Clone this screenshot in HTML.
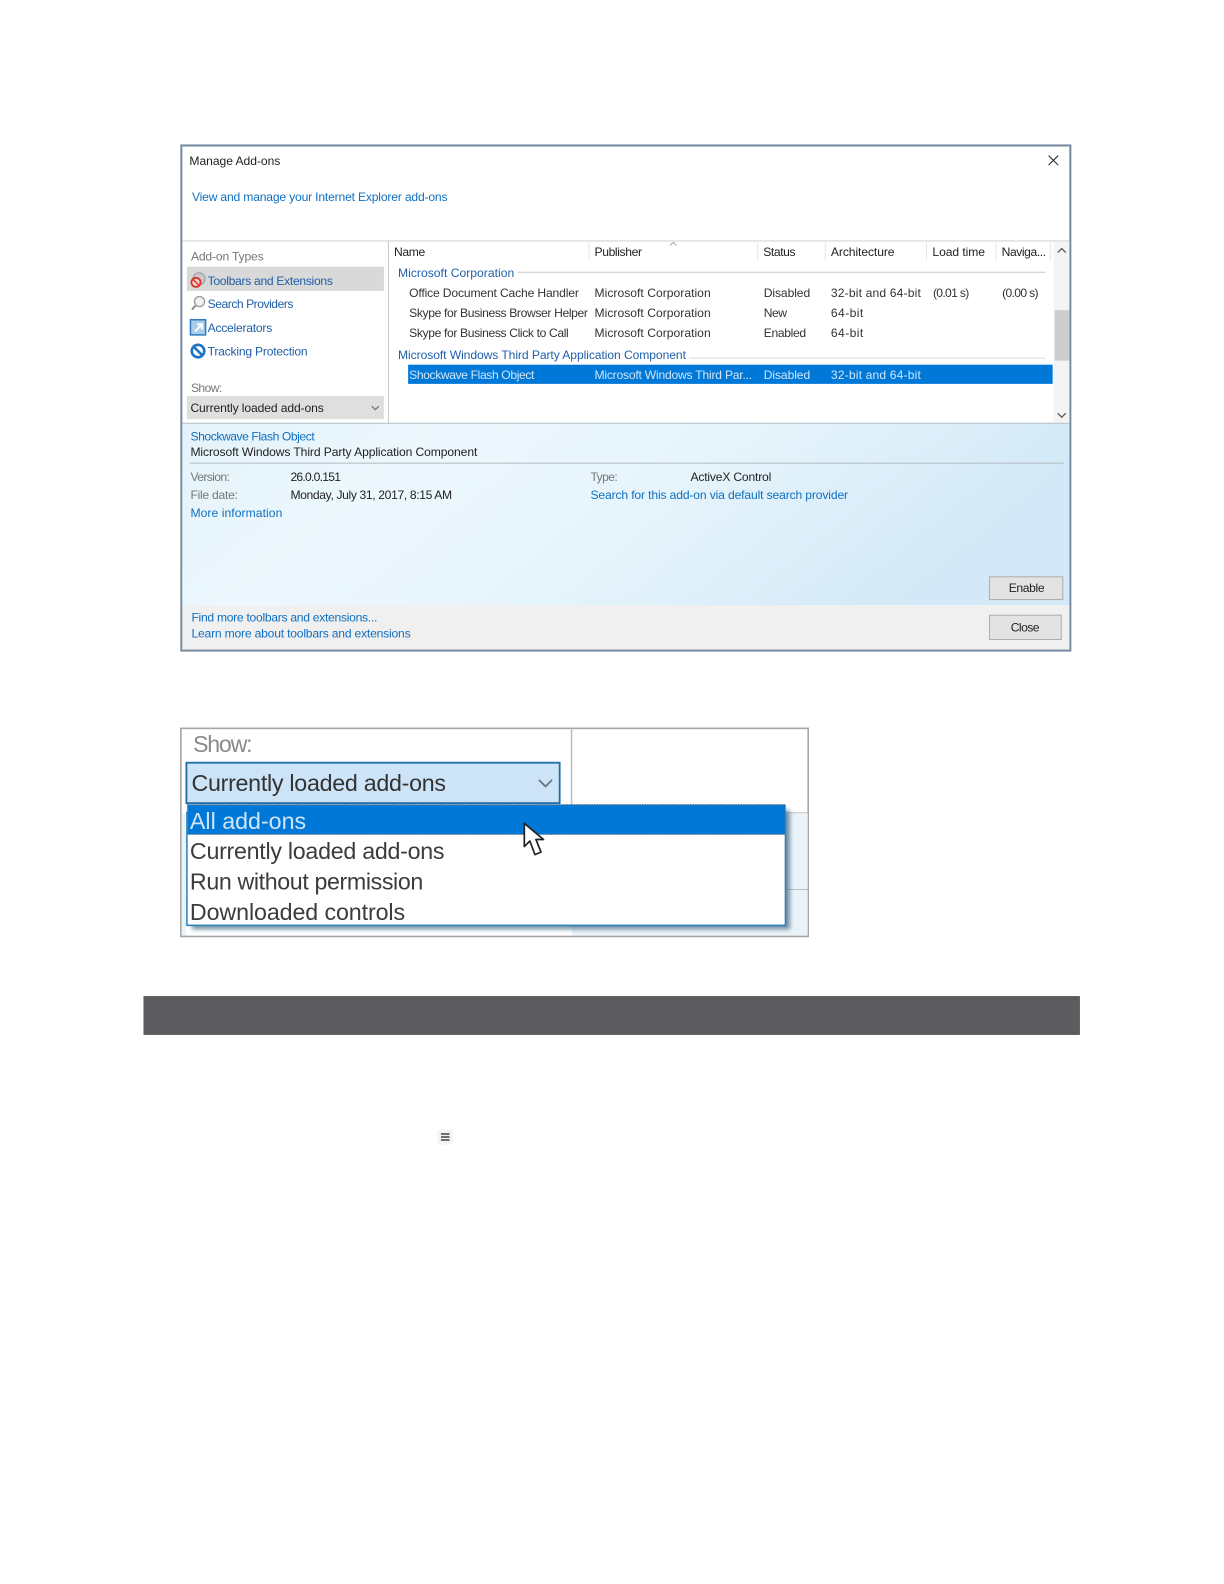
<!DOCTYPE html>
<html><head><meta charset="utf-8"><style>
html,body{margin:0;padding:0;background:#fff}
svg{display:block}
text{font-family:"Liberation Sans",sans-serif;font-size:12px;fill:#333;font-weight:400}
.b{fill:#1f5fa8}.l{fill:#0f6fc0}.g{fill:#777}.k{fill:#222}.w{fill:#cfe6fa}
.L text{font-size:23px;fill:#3c3c3c}
</style></head><body>
<svg width="1224" height="1584" viewBox="0 0 1211.6 1568" xmlns="http://www.w3.org/2000/svg">
<defs>
<linearGradient id="d" x1="0" y1="0" x2="1" y2="0.25">
<stop offset="0" stop-color="#e4f3fa"/><stop offset=".3" stop-color="#ecf8fd"/><stop offset=".6" stop-color="#e6f4fb"/><stop offset="1" stop-color="#d3e9f7"/></linearGradient>
<filter id="s" x="-5%" y="-5%" width="110%" height="115%"><feGaussianBlur stdDeviation="2"/></filter>
</defs>
<rect width="1224" height="1584" fill="#fff"/>

<!-- dialog -->
<rect x="179.500" y="144" width="880" height="500" fill="#fff" stroke="#74889e" stroke-width="2"/>
<text x="187.500" y="163.500" textLength="90" class="k">Manage Add-ons</text>
<path d="M1038 154l9.500 9.500M1047.500 154l-9.500 9.500" stroke="#333" stroke-width="1.100" fill="none"/>
<text x="190" y="199" textLength="253" class="l">View and manage your Internet Explorer add-ons</text>
<rect x="180.500" y="238" width="878" height="1" fill="#d0d0d0"/>
<rect x="384" y="239" width="1" height="180" fill="#c8c8c8"/>

<!-- left -->
<text x="189" y="258" textLength="72" class="g">Add-on Types</text>
<rect x="185" y="264" width="195" height="24" fill="#d9d9d9"/>
<circle cx="197" cy="276" r="6" fill="#c9c9c9" stroke="#999"/>
<circle cx="194" cy="279.500" r="4.500" fill="#f3d6d3" stroke="#d9362b" stroke-width="1.800"/>
<path d="M191 276.500l6 6" stroke="#d9362b" stroke-width="1.500"/>
<text x="205.500" y="282" textLength="124" class="b">Toolbars and Extensions</text>
<circle cx="197.500" cy="298.500" r="5" fill="#eef2f5" stroke="#9a9a9a" stroke-width="1.300"/>
<path d="M193.500 302.500l-3.500 4" stroke="#8a8a8a" stroke-width="2"/>
<text x="205.500" y="305" textLength="85" class="b">Search Providers</text>
<rect x="188.500" y="316.500" width="15" height="15" fill="#a9cdec" stroke="#2f7cc0" stroke-width="1.500"/>
<path d="M193 328l6-6M195 321h5v5" stroke="#fff" stroke-width="2" fill="none"/>
<text x="205.500" y="328.500" textLength="64" class="b">Accelerators</text>
<circle cx="196" cy="347.500" r="6.200" fill="#fff" stroke="#1c74c4" stroke-width="2.600"/>
<path d="M191.500 343l9 9" stroke="#1c74c4" stroke-width="2.600"/>
<text x="205.500" y="352" textLength="99" class="b">Tracking Protection</text>
<text x="189" y="388" textLength="31" class="g">Show:</text>
<rect x="185" y="392" width="195" height="23" fill="#dfdfdf"/>
<text x="188.500" y="408" textLength="132" class="k">Currently loaded add-ons</text>
<path d="M368 402l3.500 3.500 3.500-3.500" stroke="#666" fill="none"/>

<!-- headers -->
<g class="k">
<text x="390" y="253.500" textLength="31" class="k">Name</text>
<text x="588.500" y="253.500" textLength="47" class="k">Publisher</text>
<text x="755.500" y="253.500" textLength="32" class="k">Status</text>
<text x="822.500" y="253.500" textLength="63" class="k">Architecture</text>
<text x="923" y="253.500" textLength="52" class="k">Load time</text>
<text x="991.500" y="253.500" textLength="44" class="k">Naviga...</text>
</g>
<path d="M583 240v18M750 240v18M817 240v18M917 240v18M986 240v18M1040 240v18" stroke="#e6e6e6"/>
<path d="M663 243l3.500-3 3.500 3" stroke="#aaa" fill="none"/>

<!-- groups -->
<text x="394" y="274" textLength="115" class="b">Microsoft Corporation</text>
<rect x="512" y="269" width="523" height="1" fill="#c8c8d4"/>
<text x="405" y="294" textLength="168">Office Document Cache Handler</text>
<text x="588.500" y="294" textLength="115">Microsoft Corporation</text>
<text x="756" y="294" textLength="46">Disabled</text>
<text x="822.500" y="294" textLength="89">32-bit and 64-bit</text>
<text x="923.500" y="294" textLength="36">(0.01 s)</text>
<text x="992" y="294" textLength="36">(0.00 s)</text>
<text x="405" y="314" textLength="177">Skype for Business Browser Helper</text>
<text x="588.500" y="314" textLength="115">Microsoft Corporation</text>
<text x="756" y="314" textLength="23">New</text>
<text x="822.500" y="314" textLength="32">64-bit</text>
<text x="405" y="333.500" textLength="158">Skype for Business Click to Call</text>
<text x="588.500" y="333.500" textLength="115">Microsoft Corporation</text>
<text x="756" y="333.500" textLength="42">Enabled</text>
<text x="822.500" y="333.500" textLength="32">64-bit</text>
<text x="394" y="355.500" textLength="285" class="b">Microsoft Windows Third Party Application Component</text>
<rect x="682" y="354" width="353" height="1" fill="#dcdce4"/>
<rect x="404" y="361" width="638" height="19" fill="#0078d7"/>
<text x="405" y="375" textLength="124" class="w">Shockwave Flash Object</text>
<text x="588.500" y="375" textLength="156" class="w">Microsoft Windows Third Par...</text>
<text x="756" y="375" textLength="46" class="w">Disabled</text>
<text x="822.500" y="375" textLength="89" class="w">32-bit and 64-bit</text>

<!-- scrollbar -->
<rect x="1043" y="239" width="15.500" height="179" fill="#f4f4f4"/>
<rect x="1044" y="307" width="14.500" height="50" fill="#cdcdcd"/>
<path d="M1047 250l4-4 4 4M1047 409l4 4 4-4" stroke="#555" stroke-width="1.200" fill="none"/>

<!-- details -->
<rect x="180.500" y="418.500" width="878" height="1" fill="#a9b4bd"/>
<rect x="180.500" y="419.500" width="878" height="179.500" fill="url(#d)"/>
<text x="188.500" y="436" textLength="123" class="l">Shockwave Flash Object</text>
<text x="188.500" y="451.500" textLength="284" class="k">Microsoft Windows Third Party Application Component</text>
<rect x="188" y="458" width="865" height="1" fill="#b4bcc2"/>
<text x="188.500" y="476" textLength="39" class="g">Version:</text>
<text x="287.500" y="476" textLength="50" class="k">26.0.0.151</text>
<text x="188.500" y="494" textLength="47" class="g">File date:</text>
<text x="287.500" y="494" textLength="160" class="k">Monday, July 31, 2017, 8:15 AM</text>
<text x="188.500" y="512" textLength="91" class="l">More information</text>
<text x="584.500" y="476" textLength="27" class="g">Type:</text>
<text x="683.500" y="476" textLength="80" class="k">ActiveX Control</text>
<text x="584.500" y="494" textLength="255" class="l">Search for this add-on via default search provider</text>
<rect x="979.500" y="571" width="72.500" height="22.500" fill="#e3e3e3" stroke="#adadad"/>
<text x="998.500" y="586" textLength="35.500" class="k">Enable</text>

<!-- footer -->
<rect x="180.500" y="599" width="878" height="44" fill="#f0f0f0"/>
<text x="189.500" y="615" textLength="184" class="l">Find more toolbars and extensions...</text>
<text x="189.500" y="631" textLength="217" class="l">Learn more about toolbars and extensions</text>
<rect x="979.500" y="609" width="71" height="24" fill="#e3e3e3" stroke="#adadad"/>
<text x="1000.500" y="625" textLength="28.500" class="k">Close</text>

<!-- second image -->
<rect x="179" y="721" width="621" height="206" fill="#fff" stroke="#a6a6a6" stroke-width="1.600"/>
<rect x="565" y="721" width="1.500" height="84" fill="#bdbdbd"/>
<rect x="566" y="805" width="233.500" height="121" fill="#eaf3f8"/>
<rect x="566" y="804" width="233.500" height="1" fill="#c4c4c4"/>
<rect x="566" y="880" width="233.500" height="1" fill="#bdbdbd"/>
<rect x="180" y="805" width="4" height="121" fill="#eaf3f8"/>
<g class="L">
<text x="191" y="744.500" textLength="59" style="fill:#8a8a8a">Show:</text>
<rect x="184.500" y="755" width="369.500" height="40" fill="#cde3f7" stroke="#1f6fa8" stroke-width="1.800"/>
<text x="189.500" y="783" textLength="252" style="fill:#333">Currently loaded add-ons</text>
<path d="M533.500 772l6.500 6.500 6.500-6.500" stroke="#66788a" stroke-width="1.800" fill="none"/>
<rect x="190" y="802" width="592" height="118" fill="#4b6e88" filter="url(#s)" opacity=".75"/>
<rect x="185" y="804" width="592.500" height="112" fill="#fff" stroke="#2a7fb8" stroke-width="1.500"/>
<rect x="185.500" y="796.500" width="592" height="29.500" fill="#0078d7" stroke="#6f7f8e" stroke-dasharray="1.500 1" stroke-width="1.200"/>
<text x="188" y="820.500" textLength="115" style="fill:#cfe6fa">All add-ons</text>
<text x="188" y="850.500" textLength="252">Currently loaded add-ons</text>
<text x="188" y="880.500" textLength="231">Run without permission</text>
<text x="188" y="910.500" textLength="213">Downloaded controls</text>
</g>
<path d="M519 815v23l5.500-5.500 5 13.500 6-2.500-5-12.500h7.500z" fill="#fff" stroke="#222" stroke-width="1.700" stroke-linejoin="round"/>

<!-- dark bar -->
<rect x="142" y="986" width="927" height="38.500" fill="#5c5b5d"/>

<!-- menu icon -->
<rect x="433" y="1118" width="15" height="15" fill="#f4f4f4"/>
<path d="M436.500 1122.500h8.500M436.500 1125.500h8.500M436.500 1128.500h8.500" stroke="#444" stroke-width="1.500"/>
</svg>
</body></html>
